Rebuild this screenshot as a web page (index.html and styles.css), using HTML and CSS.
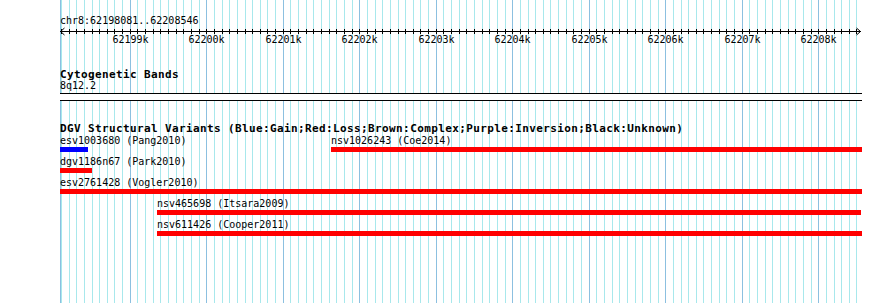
FILE: index.html
```html
<!DOCTYPE html>
<html lang="en">
<head>
<meta charset="UTF-8">
<meta name="viewport" content="width=device-width, initial-scale=1.0">
<title>chr8:62198081..62208546</title>
<link rel="stylesheet" href="styles.css">
</head>
<body>
<div class="panel top">
    <svg class="grid"></svg>
    <div class="content">
        <div class="chrom">chr8:62198081..62208546</div>
        <svg class="ruler" width="802" height="20"></svg>
        <div class="track-title">Cytogenetic Bands</div>
        <div class="band">8q12.2</div>
        <div class="rule"></div>
    </div>
</div>
<div class="gap"></div>
<div class="panel bottom">
    <svg class="grid"></svg>
    <div class="content">
        <div class="rule"></div>
        <div class="track-title dgv">DGV Structural Variants (Blue:Gain;Red:Loss;Brown:Complex;Purple:Inversion;Black:Unknown)</div>
        <div class="row first">
            <div class="feature gain" style="left:0;width:28px"><div class="label">esv1003680 (Pang2010)</div><div class="bar"></div></div>
            <div class="feature" style="left:271px;width:531px"><div class="label">nsv1026243 (Coe2014)</div><div class="bar"></div></div>
        </div>
        <div class="row">
            <div class="feature" style="left:0;width:32px"><div class="label">dgv1186n67 (Park2010)</div><div class="bar"></div></div>
        </div>
        <div class="row">
            <div class="feature" style="left:0;width:802px"><div class="label">esv2761428 (Vogler2010)</div><div class="bar"></div></div>
        </div>
        <div class="row">
            <div class="feature" style="left:97px;width:704px"><div class="label">nsv465698 (Itsara2009)</div><div class="bar"></div></div>
        </div>
        <div class="row">
            <div class="feature" style="left:97px;width:705px"><div class="label">nsv611426 (Cooper2011)</div><div class="bar"></div></div>
        </div>
    </div>
</div>

<script>
    const START = 62198081, END = 62208546;
    const scale = 76.49 / 1000;

    function xpos(bp) {
        return Math.floor((bp - START) * scale) + 0.5;
    }

    // background grid, one line per 100bp
    document.querySelectorAll('.grid').forEach(svg => {
        const h = svg.parentNode.offsetHeight;
        let html = '<line class="major" x1="0.5" x2="0.5" y1="0" y2="' + h + '"/>';
        for (let bp = Math.ceil(START / 100) * 100; bp <= END; bp += 100) {
            const x = xpos(bp);
            const cls = bp % 1000 === 0 ? 'major' : 'minor';
            html += '<line class="' + cls + '" x1="' + x + '" x2="' + x + '" y1="0" y2="' + h + '"/>';
        }
        svg.innerHTML = html;
    });

    // ruler with ticks and kb labels
    const ruler = document.querySelector('.ruler');
    let r = '<line x1="0" x2="801" y1="4.5" y2="4.5"/>';
    r += '<path d="M4.5 1 L0.5 4.5 L4.5 8"/>';
    r += '<path d="M796.5 1 L800.5 4.5 L796.5 8"/>';
    for (let bp = Math.ceil(START / 100) * 100; bp <= END; bp += 100) {
        const x = xpos(bp);
        r += '<line x1="' + x + '" x2="' + x + '" y1="2" y2="7"/>';
        if (bp % 1000 === 0) {
            r += '<text x="' + x + '" y="16">' + (bp / 1000) + 'k</text>';
        }
    }
    ruler.innerHTML = r;
</script>
</body>
</html>
```

FILE: styles.css
```css
body {
    margin: 0;
    width: 890px;
    height: 303px;
    overflow: hidden;
    background-color: #ffffff;
    color: #000000;
    font-family: "DejaVu Sans Mono", monospace;
    font-size: 10px;
    line-height: 12px;
}
.panel {
    position: relative;
}
.panel.top {
    height: 94px;
}
.panel.bottom {
    height: 203px;
}
.grid {
    position: absolute;
    left: 60px;
    top: 0;
    width: 802px;
    height: 100%;
    shape-rendering: crispEdges;
}
.grid .minor {
    stroke: #a8e8ec;
}
.grid .major {
    stroke: #8cc0e0;
}
.content {
    position: relative;
    margin-left: 60px;
    width: 802px;
}
.chrom {
    padding-top: 15px;
}
.ruler {
    display: block;
    overflow: visible;
}
.ruler line {
    stroke: #000000;
    shape-rendering: crispEdges;
}
.ruler path {
    stroke: #000000;
    fill: none;
}
.ruler text {
    font-family: "DejaVu Sans Mono", monospace;
    font-size: 10px;
    text-anchor: middle;
}
.track-title {
    margin-top: 22px;
    font-size: 11px;
    line-height: 11px;
    font-weight: bold;
    letter-spacing: 0.38px;
    white-space: nowrap;
}
.rule {
    border-top: 1px solid #000000;
}
.top .rule {
    margin-top: 1px;
}
.gap {
    height: 6px;
}
.row {
    position: relative;
    height: 21px;
}
.row.first {
    margin-top: 1px;
}
.feature {
    position: absolute;
    top: 0;
}
.label {
    white-space: nowrap;
}
.bar {
    height: 5px;
    background-color: #ff0000;
}
.gain .bar {
    background-color: #0000ff;
}
```
